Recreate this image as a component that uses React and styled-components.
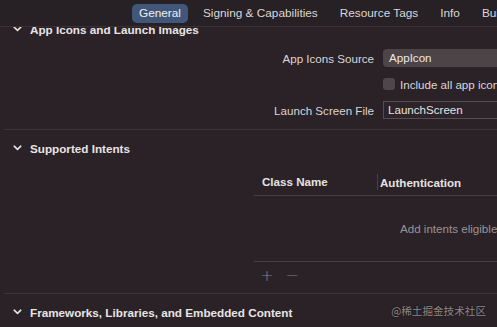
import React from 'react';
import styled, { createGlobalStyle } from 'styled-components';

const GlobalStyle = createGlobalStyle`
    html, body {
        margin: 0;
        padding: 0;
        background: #2a2226;
    }
    body {
        font-family: "Liberation Sans", Arial, sans-serif;
        font-size: 11.6px;
        color: #ddd8da;
    }
`;

function Chevron(){
    return (
        <svg width="9" height="6" viewBox="0 0 9 6">
            <path d="M1.2 1.2 L4.5 4.3 L7.8 1.2" fill="none" stroke="#e8e4e5" strokeWidth="1.6" strokeLinecap="round" strokeLinejoin="round" />
        </svg>
    );
}

function SectionTitle(props){
    return (
        <Header>
            <Chevron />
            <HeaderText>{props.children}</HeaderText>
        </Header>
    );
}

export default function App(){
    const tabs = ['General', 'Signing & Capabilities', 'Resource Tags', 'Info', 'Build Settings'];

    return (
        <Window>
            <GlobalStyle />
            <TabBar>
                {tabs.map((t, i) => (
                    <Tab key={t} $active={i === 0}>{t}</Tab>
                ))}
            </TabBar>

            <Viewport>
                <Scroller>
                    <Section>
                        <SectionTitle>App Icons and Launch Images</SectionTitle>
                        <FormGrid>
                            <Label>App Icons Source</Label>
                            <Popup>AppIcon</Popup>

                            <span />
                            <CheckRow>
                                <Checkbox />
                                <span>Include all app icon assets</span>
                            </CheckRow>

                            <Label>Launch Screen File</Label>
                            <TextField>LaunchScreen</TextField>
                        </FormGrid>
                    </Section>

                    <Section>
                        <SectionTitle>Supported Intents</SectionTitle>
                        <Table>
                            <TableHead>
                                <ClassCol>Class Name</ClassCol>
                                <AuthCol>Authentication</AuthCol>
                            </TableHead>
                            <TableBody>
                                <Placeholder>Add intents eligible for in-app handling here</Placeholder>
                            </TableBody>
                            <TableFoot>
                                <IconBtn>+</IconBtn>
                                <IconBtn>−</IconBtn>
                            </TableFoot>
                        </Table>
                    </Section>

                    <Section $last>
                        <SectionTitle>Frameworks, Libraries, and Embedded Content</SectionTitle>
                    </Section>
                </Scroller>
            </Viewport>

            <Watermark>@稀土掘金技术社区</Watermark>
        </Window>
    );
}

const Window = styled.div`
    position: relative;
    width: 497px;
    height: 327px;
    overflow: hidden;
    display: flex;
    flex-direction: column;
    background: #2a2226;
`;

const TabBar = styled.div`
    height: 26px;
    flex-shrink: 0;
    display: flex;
    align-items: center;
    gap: 8px;
    padding-left: 132px;
    background: #272024;
    border-bottom: 1px solid #3a3135;
    white-space: nowrap;
`;

const Tab = styled.div`
    height: 19px;
    line-height: 19px;
    padding: 0 7px;
    border-radius: 5px;
    font-size: 11.8px;
    color: ${p => p.$active ? '#f2eff0' : '#dcd7d9'};
    background: ${p => p.$active ? '#40577a' : 'transparent'};
`;

const Viewport = styled.div`
    flex: 1;
    overflow: hidden;
`;

const Scroller = styled.div`
    margin-top: -16px;
`;

const Section = styled.div`
    margin-left: 4px;
    border-bottom: ${p => p.$last ? 'none' : '1px solid #3d3438'};
`;

const Header = styled.div`
    height: 16px;
    margin-top: 10px;
    padding-left: 9px;
    display: flex;
    align-items: center;
    gap: 8px;
`;

const HeaderText = styled.span`
    font-weight: bold;
    font-size: 11.7px;
    color: #e8e4e5;
    white-space: nowrap;
`;

const FormGrid = styled.div`
    display: grid;
    grid-template-columns: 370px 200px;
    column-gap: 9px;
    row-gap: 11px;
    align-items: center;
    padding: 12px 0 10px;
`;

const Label = styled.span`
    text-align: right;
    color: #dad5d7;
    white-space: nowrap;
`;

const Popup = styled.div`
    height: 18px;
    line-height: 18px;
    padding-left: 6px;
    border-radius: 4px;
    background: #4c4447;
    color: #ebe7e8;
`;

const CheckRow = styled.div`
    display: flex;
    align-items: center;
    gap: 5px;
    height: 12px;
    white-space: nowrap;
    color: #dcd7d9;
`;

const Checkbox = styled.span`
    width: 12px;
    height: 12px;
    border-radius: 3px;
    background: #4e4649;
    flex-shrink: 0;
`;

const TextField = styled.div`
    box-sizing: border-box;
    height: 18px;
    line-height: 16px;
    padding-left: 4px;
    border: 1px solid #554c50;
    background: #2c2428;
    color: #e6e2e3;
`;

const Table = styled.div`
    margin-left: 250px;
    margin-top: 13px;
    width: 500px;
`;

const TableHead = styled.div`
    height: 26px;
    display: flex;
    align-items: center;
    border-bottom: 1px solid #473e42;
    font-weight: bold;
    color: #e6e2e3;
`;

const ClassCol = styled.div`
    width: 115px;
    padding-left: 8px;
    border-right: 1px solid #4a4145;
    line-height: 16px;
`;

const AuthCol = styled.div`
    padding-left: 2px;
`;

const TableBody = styled.div`
    height: 65px;
    display: flex;
    align-items: center;
    padding-left: 146px;
    border-bottom: 1px solid #473e42;
`;

const Placeholder = styled.span`
    color: #9a9396;
    white-space: nowrap;
`;

const TableFoot = styled.div`
    height: 26px;
    display: flex;
    align-items: center;
    padding-left: 3px;
    gap: 5px;
    margin-bottom: 5px;
`;

const IconBtn = styled.span`
    width: 20px;
    text-align: center;
    font-size: 16px;
    font-weight: 300;
    color: #8b8487;
    font-family: "DejaVu Sans", sans-serif;
`;

const Watermark = styled.div`
    position: absolute;
    right: 11px;
    bottom: 9px;
    font-family: "Noto Sans CJK SC", sans-serif;
    font-size: 10.6px;
    color: #8c8789;
    text-shadow: 0 0 2px rgba(0,0,0,0.5);
`;
